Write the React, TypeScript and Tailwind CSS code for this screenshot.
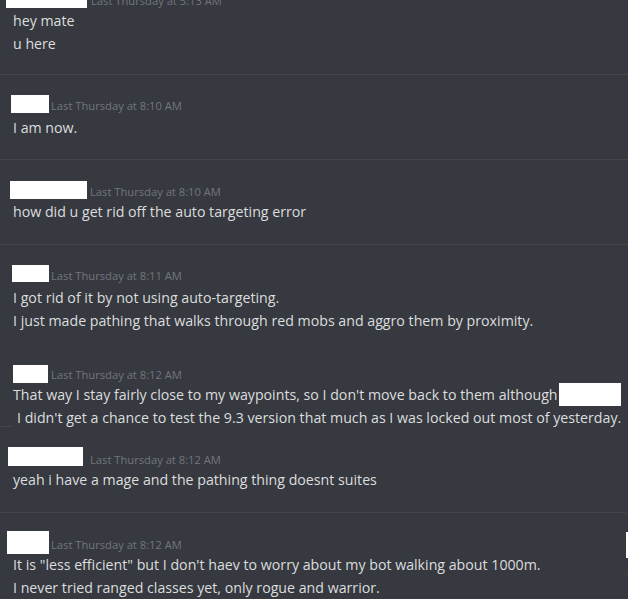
import React from "react";

const font = { fontFamily: '"Open Sans", "Noto Sans", sans-serif' };

function Divider() {
  return <div className="h-px w-full bg-[#42454a]" />;
}

const ts = "text-[11.2px] leading-[16px] text-[#72767d] whitespace-nowrap";

export default function App() {
  return (
    <div
      className="w-[628px] h-[599px] overflow-hidden flex flex-col bg-[#36393f] text-[#dcddde] text-[14.2px] leading-[23px]"
      style={font}
    >
      {/* Block A */}
      <div className="h-[74px] shrink-0 flex flex-col">
        <div className="flex items-end -mt-[10px]">
          <div className="ml-[6px] w-[81px] h-[18px] bg-white" />
          <div className={"ml-[4px] -mb-px " + ts}>Last Thursday at 5:13 AM</div>
        </div>
        <div className="pl-[13px] mt-px">
          <div>hey mate</div>
          <div>u here</div>
        </div>
      </div>
      <Divider />
      {/* Block B */}
      <div className="h-[84px] shrink-0 flex flex-col pt-[20px]">
        <div className="flex items-end">
          <div className="ml-[11px] w-[38px] h-[18px] bg-white" />
          <div className={"ml-[2px] -mb-px " + ts}>Last Thursday at 8:10 AM</div>
        </div>
        <div className="pl-[13px] mt-[3px]">I am now.</div>
      </div>
      <Divider />
      {/* Block C */}
      <div className="h-[84px] shrink-0 flex flex-col pt-[21px]">
        <div className="flex items-end">
          <div className="ml-[10px] w-[77px] h-[18px] bg-white" />
          <div className={"ml-[3px] -mb-px " + ts}>Last Thursday at 8:10 AM</div>
        </div>
        <div className="pl-[13px] mt-[1px]">how did u get rid off the auto targeting error</div>
      </div>
      <Divider />
      {/* Block D */}
      <div className="h-[100px] shrink-0 flex flex-col pt-[20px]">
        <div className="flex items-end">
          <div className="ml-[12px] w-[37px] h-[17px] bg-white" />
          <div className={"ml-[2px] -mb-[2px] " + ts}>Last Thursday at 8:11 AM</div>
        </div>
        <div className="pl-[13px] mt-[4px]">
          <div>I got rid of it by not using auto-targeting.</div>
          <div>I just made pathing that walks through red mobs and aggro them by proximity.</div>
        </div>
      </div>
      {/* Block E */}
      <div className="h-[81px] shrink-0 flex flex-col pt-[20px]">
        <div className="flex items-end">
          <div className="ml-[13px] w-[35px] h-[18px] bg-white" />
          <div className={"ml-[3px] " + ts}>Last Thursday at 8:12 AM</div>
        </div>
        <div className="pl-[13px] whitespace-nowrap">
          <div className="flex items-center">
            <span>That way I stay fairly close to my waypoints, so I don't move back to them although</span>
            <span className="ml-px w-[62px] h-[23px] bg-white shrink-0" />
          </div>
          <div className="pl-[4px]">I didn't get a chance to test the 9.3 version that much as I was locked out most of yesterday.</div>
        </div>
      </div>
      <div className="h-px w-[12px] shrink-0 bg-[#42454a]" />
      {/* Block F */}
      <div className="h-[85px] shrink-0 flex flex-col pt-[20px]">
        <div className="flex items-end">
          <div className="ml-[8px] w-[75px] h-[19px] bg-white" />
          <div className={"ml-[7px] -mb-[2px] " + ts}>Last Thursday at 8:12 AM</div>
        </div>
        <div className="pl-[13px] mt-[2px]">yeah i have a mage and the pathing thing doesnt suites</div>
      </div>
      <div className="flex shrink-0">
        <div className="h-px w-[626px] bg-[#42454a]" />
      </div>
      {/* Block G */}
      <div className="flex shrink-0">
        <div className="w-[626px] pt-[18px]">
          <div className="flex items-end">
            <div className="ml-[7px] w-[42px] h-[23px] bg-white" />
            <div className={"ml-[2px] mb-[1px] " + ts}>Last Thursday at 8:12 AM</div>
          </div>
          <div className="pl-[13px] -mt-px">
            <div>It is "less efficient" but I don't haev to worry about my bot walking about 1000m.</div>
            <div>I never tried ranged classes yet, only rogue and warrior.</div>
          </div>
        </div>
        <div className="w-[2px] pt-[19px]">
          <div className="h-[26px] w-[2px] bg-white" />
          <div className="mt-[17px] h-px w-[2px] bg-[#42454a]" />
        </div>
      </div>
    </div>
  );
}
